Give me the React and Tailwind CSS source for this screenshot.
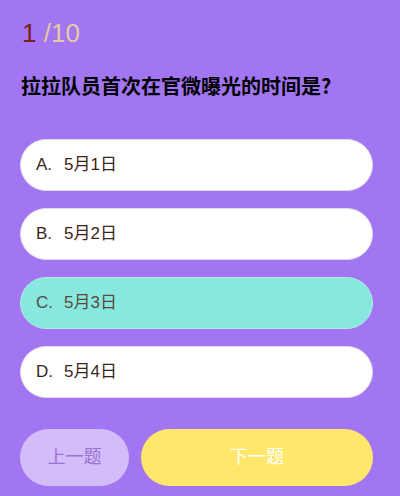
import React, { useState } from 'react';

const options = [
  { key: 'A', text: '5月1日' },
  { key: 'B', text: '5月2日' },
  { key: 'C', text: '5月3日' },
  { key: 'D', text: '5月4日' },
];

const font = { fontFamily: '"Liberation Sans", "Noto Sans CJK SC", sans-serif' };

const App = () => {
  const [selected, setSelected] = useState('C');

  return (
    <div className="w-[400px] h-[496px] bg-[#a275f3] px-5 pt-[17px] overflow-hidden" style={font}>
      <div className="text-[26px] leading-8 pl-[2px]">
        <span className="text-[#7c1c1c]">1</span>
        <span className="text-[#e6caa2]"> /10</span>
      </div>

      <h2
        className="mt-[23px] pl-[1px] text-[20px] leading-7 font-bold text-black"
        style={{ fontFamily: '"Noto Sans CJK SC", sans-serif' }}
      >
        拉拉队员首次在官微曝光的时间是?
      </h2>

      {/* Options */}
      <div className="mt-[39px] flex flex-col gap-[17px]">
        {options.map((o) => (
          <button
            key={o.key}
            onClick={() => setSelected(o.key)}
            className={`h-[52px] w-[353px] rounded-full border flex items-center pl-[15px] text-[17px] ${
              selected === o.key
                ? 'bg-[#87e8df] border-[#b5e9e0] text-[#5a4a3e]'
                : 'bg-white border-[#e3dbe8] text-[#3b2418]'
            }`}
          >
            <span className="w-[28px] text-left">{o.key}.</span>
            <span>{o.text}</span>
          </button>
        ))}
      </div>

      {/* Nav buttons */}
      <div className="mt-[31px] flex gap-3 w-[353px]">
        <button className="h-[57px] w-[109px] rounded-full bg-[#d2bdf8] text-[#9a72d2] text-[18px]">上一题</button>
        <button className="h-[57px] flex-1 rounded-full bg-[#ffe76b] text-white text-[18px]">下一题</button>
      </div>
    </div>
  );
};

export default App;
